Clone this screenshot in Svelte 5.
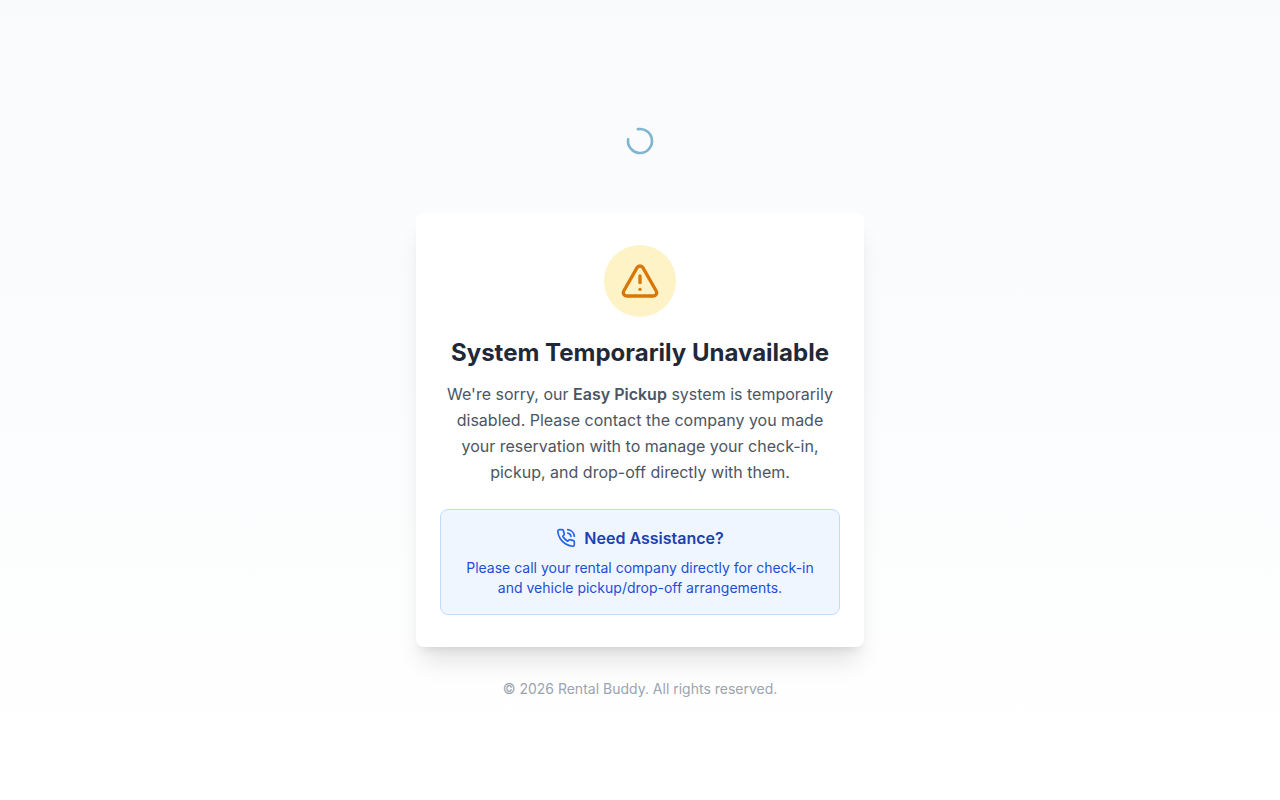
<!--
  Maintenance page: shown in place of the check-in flow while the
  Easy Pickup system is switched off.
-->
<script lang="ts">
  const year = 2026;
</script>

<svelte:head>
  <title>System Temporarily Unavailable</title>
</svelte:head>

<div class="page">
  <div class="content">
    <div class="logo">
      <svg class="spinner" viewBox="0 0 24 24" role="img" aria-label="Loading">
        <path d="M21 12a9 9 0 1 1-6.219-8.56" transform="rotate(-100 12 12)" />
      </svg>
    </div>

    <main class="card">
      <span class="badge">
        <svg viewBox="0 0 24 24" aria-hidden="true">
          <path d="m21.73 18-8-14a2 2 0 0 0-3.48 0l-8 14A2 2 0 0 0 4 21h16a2 2 0 0 0 1.73-3" />
          <path d="M12 9v4" />
          <path d="M12 17h.01" />
        </svg>
      </span>

      <h1>System Temporarily Unavailable</h1>
      <p class="message">
        We're sorry, our <strong>Easy Pickup</strong> system is temporarily disabled. Please contact
        the company you made your reservation with to manage your check-in, pickup, and drop-off
        directly with them.
      </p>

      <section class="help">
        <h2>
          <svg viewBox="0 0 24 24" aria-hidden="true">
            <path
              d="M22 16.92v3a2 2 0 0 1-2.18 2 19.79 19.79 0 0 1-8.63-3.07 19.5 19.5 0 0 1-6-6 19.79 19.79 0 0 1-3.07-8.67A2 2 0 0 1 4.11 2h3a2 2 0 0 1 2 1.72 12.84 12.84 0 0 0 .7 2.81 2 2 0 0 1-.45 2.11L8.09 9.91a16 16 0 0 0 6 6l1.27-1.27a2 2 0 0 1 2.11-.45 12.84 12.84 0 0 0 2.81.7A2 2 0 0 1 22 16.92z"
            />
            <path d="M14.05 2a9 9 0 0 1 8 7.94" />
            <path d="M14.05 6A5 5 0 0 1 18 10" />
          </svg>
          Need Assistance?
        </h2>
        <p>
          Please call your rental company directly for check-in and vehicle pickup/drop-off
          arrangements.
        </p>
      </section>
    </main>

    <footer>© {year} Rental Buddy. All rights reserved.</footer>
  </div>
</div>

<style>
  :global(body) {
    margin: 0;
    font-family: Inter, "Liberation Sans", sans-serif;
  }

  .page {
    box-sizing: border-box;
    display: flex;
    align-items: center;
    justify-content: center;
    min-height: 100vh;
    padding: 16px;
    background: linear-gradient(to bottom, #f8fafc, #fff);
  }

  .content {
    width: 100%;
    max-width: 448px;
    text-align: center;
  }

  svg {
    flex: none;
    fill: none;
    stroke: currentColor;
    stroke-width: 2;
    stroke-linecap: round;
    stroke-linejoin: round;
  }

  .logo {
    display: flex;
    align-items: center;
    justify-content: center;
    height: 80px;
    margin-bottom: 32px;
  }

  .spinner {
    width: 32px;
    height: 32px;
    color: #7fb5cd;
  }

  .card {
    display: flex;
    flex-direction: column;
    align-items: center;
    padding: 32px 24px;
    border-radius: 8px;
    background: #fff;
    box-shadow:
      0 20px 25px -5px rgb(0 0 0 / 0.1),
      0 8px 10px -6px rgb(0 0 0 / 0.1);
  }

  .badge {
    display: flex;
    padding: 16px;
    border-radius: 50%;
    background: #fef3c7;
    color: #d97706;
  }

  .badge svg {
    width: 40px;
    height: 40px;
  }

  h1 {
    margin: 20px 0 12px;
    color: #1f2937;
    font-size: 24px;
    font-weight: 700;
    line-height: 32px;
  }

  .message {
    margin: 0 0 24px;
    color: #4b5563;
    font-size: 16px;
    line-height: 26px;
  }

  .message strong {
    font-weight: 600;
  }

  .help {
    box-sizing: border-box;
    width: 100%;
    padding: 16px;
    border: 1px solid #bfdbfe;
    border-radius: 8px;
    background: #eff6ff;
  }

  .help h2 {
    display: flex;
    align-items: center;
    justify-content: center;
    gap: 8px;
    margin: 0 0 8px;
    color: #1e40af;
    font-size: 16px;
    font-weight: 600;
    line-height: 24px;
  }

  .help svg {
    width: 20px;
    height: 20px;
    color: #2563eb;
  }

  .help p {
    margin: 0;
    color: #1d4ed8;
    font-size: 14px;
    line-height: 20px;
  }

  footer {
    margin-top: 32px;
    color: #9ca3af;
    font-size: 14px;
    line-height: 20px;
  }
</style>
